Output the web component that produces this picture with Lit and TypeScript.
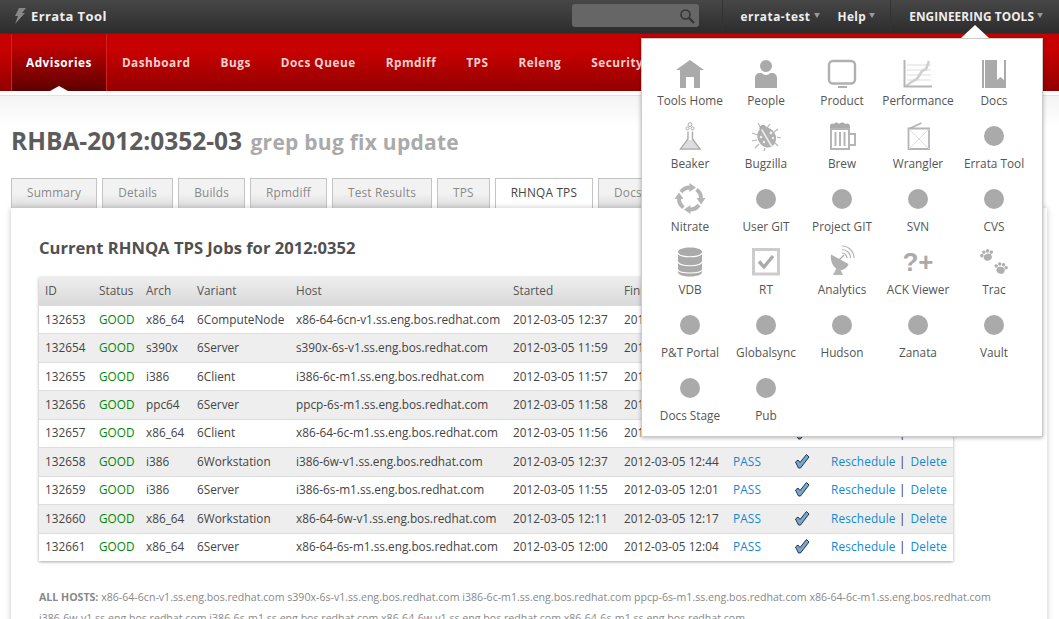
import { LitElement, css, html, svg } from 'lit'
import { customElement } from 'lit/decorators.js'

interface Job {
  id: string
  arch: string
  variant: string
  host: string
  started: string
  finished: string
}

const jobs: Job[] = [
  { id: '132653', arch: 'x86_64', variant: '6ComputeNode', host: 'x86-64-6cn-v1', started: '12:37', finished: '12:44' },
  { id: '132654', arch: 's390x', variant: '6Server', host: 's390x-6s-v1', started: '11:59', finished: '12:05' },
  { id: '132655', arch: 'i386', variant: '6Client', host: 'i386-6c-m1', started: '11:57', finished: '12:02' },
  { id: '132656', arch: 'ppc64', variant: '6Server', host: 'ppcp-6s-m1', started: '11:58', finished: '12:03' },
  { id: '132657', arch: 'x86_64', variant: '6Client', host: 'x86-64-6c-m1', started: '11:56', finished: '12:01' },
  { id: '132658', arch: 'i386', variant: '6Workstation', host: 'i386-6w-v1', started: '12:37', finished: '12:44' },
  { id: '132659', arch: 'i386', variant: '6Server', host: 'i386-6s-m1', started: '11:55', finished: '12:01' },
  { id: '132660', arch: 'x86_64', variant: '6Workstation', host: 'x86-64-6w-v1', started: '12:11', finished: '12:17' },
  { id: '132661', arch: 'x86_64', variant: '6Server', host: 'x86-64-6s-m1', started: '12:00', finished: '12:04' },
]

const navItems = ['Advisories', 'Dashboard', 'Bugs', 'Docs Queue', 'Rpmdiff', 'TPS', 'Releng', 'Security']
const tabs = ['Summary', 'Details', 'Builds', 'Rpmdiff', 'Test Results', 'TPS', 'RHNQA TPS', 'Docs']
const suffix = '.ss.eng.bos.redhat.com'

const dot = svg`<circle cx="15" cy="15" r="10" fill="#aaa" />`

const arrow = (deg: number) => svg`
  <g transform="rotate(${deg} 15 14.5)">
    <path d="M6 8 A11 11 0 0 1 15 3.5" fill="none" stroke="#b5b5b5" stroke-width="4" />
    <path d="M14.5 -1 L21 3.5 L14.5 8 Z" fill="#b5b5b5" />
  </g>`

const paw = (x: number, y: number, deg: number) => svg`
  <g transform="translate(${x} ${y}) rotate(${deg}) scale(1.15)" fill="#b0b0b0">
    <ellipse cx="0" cy="2" rx="3.6" ry="3" />
    <circle cx="-4.4" cy="-1" r="1.5" />
    <circle cx="-1.7" cy="-3.2" r="1.5" />
    <circle cx="1.7" cy="-3.2" r="1.5" />
    <circle cx="4.4" cy="-1" r="1.5" />
  </g>`

const icons: Record<string, unknown> = {
  home: svg`<path d="M15 2 29 12H25V30H19V19H11V30H5V12H1Z" fill="#aaa" />`,
  people: svg`
    <circle cx="15" cy="8" r="6" fill="#aaa" />
    <path d="M4 30V20C4 17 6 15 9 15L11 15C12 17.5 18 17.5 19 15H21C24 15 26 17 26 20V30Z" fill="#aaa" />`,
  product: svg`
    <rect x="2" y="3" width="26" height="22.5" rx="4" fill="none" stroke="#b0b0b0" stroke-width="2.4" />
    <rect x="11" y="28" width="9" height="2" fill="#b0b0b0" />`,
  performance: svg`
    <path d="M4 7H28M4 12H28M4 17H28M4 22H28" stroke="#ddd" stroke-width="1" />
    <path d="M3 28 10 23 14 21 19 13 23 11 26 3" fill="none" stroke="#cfcfcf" stroke-width="2.6" />
    <path d="M1.5 2V28.5H29" fill="none" stroke="#b5b5b5" stroke-width="2" />`,
  docs: svg`
    <path d="M3 2H27V30H3Z" fill="#aaa" />
    <path d="M5.5 2V30" stroke="#fff" stroke-width="1" />
    <path d="M18 2H25V22L21.5 19 18 22Z" fill="#fff" />`,
  beaker: svg`
    <circle cx="15" cy="3.6" r="1.9" fill="none" stroke="#aaa" />
    <circle cx="12.5" cy="7.4" r="1.5" fill="none" stroke="#aaa" />
    <circle cx="17.5" cy="7.4" r="1.5" fill="none" stroke="#aaa" />
    <path d="M7.5 27 13 19H18L23.5 27Z" fill="#ddd" />
    <path d="M13 10.5V18L5.5 28H25L17.5 18V10.5" fill="none" stroke="#aaa" stroke-width="1.4" />`,
  bugzilla: svg`
    <g stroke="#b5b5b5" stroke-width="1.2" fill="none">
      <path d="M7 2 10 7M19 3 16 7M1 12 7 14M1 20 6 19M4 27 8 23M27 8 23 11M30 17 26 16M27 25 24 22M13 30 14 27" />
    </g>
    <circle cx="12" cy="7.5" r="3.5" fill="#aaa" />
    <ellipse cx="15.7" cy="16.3" rx="9" ry="10.5" fill="#b0b0b0" transform="rotate(-30 15.7 16.3)" />
    <path d="M10.7 8.7 20.7 25.3" stroke="#eee" stroke-width="1.6" />
    <g fill="#eee">
      <circle cx="20" cy="12" r="1.4" /><circle cx="22" cy="17" r="1.2" /><circle cx="10" cy="16" r="1.3" />
      <circle cx="13" cy="21" r="1.2" />
    </g>`,
  brew: svg`
    <path d="M3 5C3 2 6 2 7 3 8 1 11 1 12 3 14 1 17 1 18 3 20 2 23 2 23 6V9H3Z" fill="#aaa" />
    <rect x="4" y="8" width="18" height="20" fill="none" stroke="#b5b5b5" stroke-width="2" />
    <path d="M8.5 11V25M13 11V25M17.5 11V25" stroke="#b5b5b5" stroke-width="2" />
    <path d="M23 13H28V24H23" fill="none" stroke="#b5b5b5" stroke-width="2" />`,
  wrangler: svg`
    <path d="M5.5 28V7.5H26V28Z" fill="none" stroke="#b5b5b5" stroke-width="1.8" />
    <path d="M5.5 8 18.5 2" stroke="#b5b5b5" stroke-width="1.8" />
    <path d="M6 8 26 28M26 8 6 28" stroke="#ddd" stroke-width="1" />`,
  nitrate: svg`${arrow(0)}${arrow(90)}${arrow(180)}${arrow(270)}`,
  vdb: svg`
    <path d="M3 5C3 -1 27 -1 27 5V25C27 31 3 31 3 25Z" fill="#aaa" />
    <path d="M3 6C5 11 25 11 27 6M3 15C5 20 25 20 27 15M3 23C5 27 25 27 27 23" fill="none" stroke="#fff" stroke-width="1.2" />`,
  rt: svg`
    <rect x="2.5" y="2.5" width="25" height="24.5" fill="none" stroke="#ccc" stroke-width="3" />
    <path d="M8 14.5 13 20 22 9" fill="none" stroke="#aaa" stroke-width="3.4" />`,
  analytics: svg`
    <path d="M4 7.5 21.5 17C20 22 15 24 11 22.5 6 20.5 3 14 4 7.5Z" fill="#b0b0b0" />
    <path d="M9.5 21 6 28H16L13 21.5Z" fill="#b5b5b5" />
    <path d="M12 13 17 8" stroke="#aaa" stroke-width="1.2" />
    <g fill="none" stroke="#b5b5b5" stroke-width="1.2">
      <path d="M15 6A5 5 0 0 1 20 11" /><path d="M15 2.5A8.5 8.5 0 0 1 23.5 11" /><path d="M15 -1A12 12 0 0 1 27 11" />
    </g>`,
  trac: svg`${paw(8, 8, -20)}${paw(22, 21, 10)}`,
}

const tools: { label: string; icon?: string }[] = [
  { label: 'Tools Home', icon: 'home' },
  { label: 'People', icon: 'people' },
  { label: 'Product', icon: 'product' },
  { label: 'Performance', icon: 'performance' },
  { label: 'Docs', icon: 'docs' },
  { label: 'Beaker', icon: 'beaker' },
  { label: 'Bugzilla', icon: 'bugzilla' },
  { label: 'Brew', icon: 'brew' },
  { label: 'Wrangler', icon: 'wrangler' },
  { label: 'Errata Tool' },
  { label: 'Nitrate', icon: 'nitrate' },
  { label: 'User GIT' },
  { label: 'Project GIT' },
  { label: 'SVN' },
  { label: 'CVS' },
  { label: 'VDB', icon: 'vdb' },
  { label: 'RT', icon: 'rt' },
  { label: 'Analytics', icon: 'analytics' },
  { label: 'ACK Viewer', icon: 'ack' },
  { label: 'Trac', icon: 'trac' },
  { label: 'P&T Portal' },
  { label: 'Globalsync' },
  { label: 'Hudson' },
  { label: 'Zanata' },
  { label: 'Vault' },
  { label: 'Docs Stage' },
  { label: 'Pub' },
]

@customElement('app-root')
export class AppRoot extends LitElement {
  static styles = css`
    :host {
      display: block;
      position: relative;
      height: 100vh;
      overflow: hidden;
      background: #fff;
      font-family: 'Open Sans', 'Noto Sans', sans-serif;
      font-size: 11.8px;
      color: #444;
    }
    .topbar {
      display: flex;
      align-items: center;
      box-sizing: border-box;
      height: 33px;
      padding-bottom: 2px;
      background: linear-gradient(#474747, #2c2c2c);
      color: #eee;
      font-weight: 700;
    }
    .logo {
      display: flex;
      align-items: center;
      gap: 5px;
      margin-left: 14px;
      font-size: 13px;
      letter-spacing: 0.4px;
    }
    .search {
      display: flex;
      align-items: center;
      justify-content: flex-end;
      box-sizing: border-box;
      width: 127px;
      height: 23px;
      margin-left: auto;
      padding-right: 4px;
      border-radius: 3px;
      background: #666;
    }
    .sep {
      align-self: stretch;
      width: 1px;
      background: #333;
    }
    .user {
      margin-left: 18px;
      letter-spacing: 0.55px;
    }
    .help {
      margin-left: 18px;
      letter-spacing: 0.4px;
    }
    .engineering {
      margin-left: 18px;
      margin-right: 16px;
      letter-spacing: 0.1px;
    }
    .sep-left {
      margin-left: 23px;
    }
    .sep-mid {
      margin-left: 15px;
    }
    .menu {
      display: flex;
      align-items: center;
    }
    .menu i {
      margin-left: 3px;
      width: 0;
      height: 0;
      border: 3.5px solid transparent;
      border-top: 5px solid #999;
      border-bottom: 0;
    }
    .nav {
      display: flex;
      box-sizing: border-box;
      height: 58px;
      padding-left: 11px;
      background: linear-gradient(#c70000 30%, #930000);
      border-top: 1px solid #a00;
    }
    .nav a {
      position: relative;
      padding: 20px 15px 0;
      color: #f3d0d0;
      font-weight: 700;
      letter-spacing: 0.5px;
    }
    .nav a.active {
      color: #fff;
      background: linear-gradient(#c00000 20%, #5e0000);
      box-shadow: inset 1px 0 #d02020, inset -1px 0 #d02020;
    }
    .nav a.active::after {
      content: '';
      position: absolute;
      left: 50%;
      bottom: 0;
      margin-left: -9px;
      border: 9px solid transparent;
      border-top: 0;
      border-bottom: 5px solid #fff;
    }
    .content {
      padding: 4px 12px 0 11px;
    }
    .fade {
      height: 30px;
      margin: 0 -12px -30px -11px;
      border-top: 1px solid #e2e2e2;
      background: linear-gradient(#f4f4f4, #fff);
    }
    h1 {
      margin: 0;
      padding-top: 28px;
      height: 54px;
      font-size: 24.5px;
      line-height: 34px;
      font-weight: 700;
      color: #5c5c5c;
    }
    h1 small {
      margin-left: 2px;
      font-size: 21px;
      color: #aaa;
      letter-spacing: 0.25px;
    }
    .tabs {
      display: flex;
      gap: 5px;
      height: 30px;
    }
    .tabs a {
      box-sizing: border-box;
      height: 30px;
      padding: 5px 15px 0;
      border: 1px solid #c4c4c4;
      border-bottom: 0;
      background: linear-gradient(#f2f2f2 50%, #dcdcdc);
      color: #888;
      letter-spacing: 0.2px;
    }
    .tabs a.active {
      background: #fff;
      color: #444;
    }
    .panel {
      position: relative;
      height: 420px;
      padding: 28px 28px 0;
      background: #fff;
      box-shadow: 0 0 6px rgba(0, 0, 0, 0.22);
    }
    h2 {
      margin: 0 0 18px;
      font-size: 16.6px;
      line-height: 23px;
      font-weight: 700;
      color: #505050;
    }
    table {
      table-layout: fixed;
      width: 914px;
      border-collapse: collapse;
      box-shadow: 0 1px 3px rgba(0, 0, 0, 0.35);
    }
    th,
    td {
      padding: 0 0 2px 6px;
      text-align: left;
      white-space: nowrap;
      overflow: hidden;
    }
    th {
      height: 26px;
      font-weight: 400;
      color: #555;
      background: linear-gradient(#eee, #d9d9d9);
    }
    td {
      height: 25.44px;
      border-top: 1px solid #ddd;
      color: #444;
      background: #fff;
    }
    tbody tr:nth-child(even) td {
      background: #eee;
    }
    .c-id { width: 48px; }
    .c-status { width: 41px; }
    .c-arch { width: 45px; }
    .c-variant { width: 93px; }
    .c-host { width: 211px; }
    .c-started { width: 105px; }
    .c-finished { width: 103px; }
    .c-result { width: 55px; }
    .c-check { width: 31px; }
    .good {
      color: #080;
    }
    td a {
      color: #1288d2;
      letter-spacing: 0.15px;
    }
    .bar {
      margin: 0 5px 0 3.5px;
      color: #333;
    }
    .check {
      display: block;
    }
    .hosts {
      margin: 26px 0 0;
      font-size: 10.6px;
      line-height: 21px;
      color: #888;
    }
    .hosts b {
      color: #888;
    }
    .hosts span {
      white-space: nowrap;
    }
    .tools {
      position: absolute;
      left: 641px;
      top: 38px;
      box-sizing: border-box;
      width: 402px;
      height: 399px;
      padding: 19px 10px 0;
      display: grid;
      grid-template-columns: repeat(5, 76px);
      grid-auto-rows: 63px;
      background: #fff;
      border: 1px solid #ccc;
      box-shadow: 0 1px 4px rgba(0, 0, 0, 0.3);
    }
    .tools::before {
      content: '';
      position: absolute;
      left: 319px;
      top: -14px;
      border: 14px solid transparent;
      border-top: 0;
      border-bottom: 13px solid #fff;
    }
    .tool {
      display: flex;
      flex-direction: column;
      align-items: center;
      color: #555;
      white-space: nowrap;
    }
    .tool svg {
      display: block;
      width: 30px;
      height: 30px;
      overflow: visible;
    }
    .tool span {
      margin-top: 4px;
      line-height: 16px;
    }
    .tool .ack {
      height: 30px;
      font-family: 'Liberation Sans', sans-serif;
      font-size: 26px;
      font-weight: 700;
      line-height: 30px;
      color: #aaa;
      margin: 0;
    }
  `

  renderTool(t: { label: string; icon?: string }) {
    const glyph =
      t.icon === 'ack'
        ? html`<span class="ack">?+</span>`
        : html`<svg viewBox="0 0 30 30">${t.icon ? icons[t.icon] : dot}</svg>`
    return html`<div class="tool">${glyph}<span>${t.label}</span></div>`
  }

  render() {
    return html`
      <div class="topbar">
        <div class="logo">
          <svg width="12" height="16" viewBox="0 0 12 16"><path d="M5 0H12L8 5H11L1 16 4 8H1Z" fill="#888" /></svg>
          Errata Tool
        </div>
        <div class="search">
          <svg width="16" height="16" viewBox="0 0 16 16">
            <circle cx="6.5" cy="6.5" r="4.5" fill="none" stroke="#333" stroke-width="1.5" />
            <path d="M10 10 15 15" stroke="#333" stroke-width="2.2" />
          </svg>
        </div>
        <div class="sep sep-left"></div>
        <div class="menu user">errata-test<i></i></div>
        <div class="menu help">Help<i></i></div>
        <div class="sep sep-mid"></div>
        <div class="menu engineering">ENGINEERING TOOLS<i></i></div>
      </div>
      <div class="nav">
        ${navItems.map((n, i) => html`<a class=${i === 0 ? 'active' : ''}>${n}</a>`)}
      </div>
      <div class="content">
        <div class="fade"></div>
        <h1>RHBA-2012:0352-03 <small>grep bug fix update</small></h1>
        <div class="tabs">
          ${tabs.map((t) => html`<a class=${t === 'RHNQA TPS' ? 'active' : ''}>${t}</a>`)}
        </div>
        <div class="panel">
          <h2>Current RHNQA TPS Jobs for 2012:0352</h2>
          <table>
            <thead>
              <tr>
                <th class="c-id">ID</th>
                <th class="c-status">Status</th>
                <th class="c-arch">Arch</th>
                <th class="c-variant">Variant</th>
                <th class="c-host">Host</th>
                <th class="c-started">Started</th>
                <th class="c-finished">Finished</th>
                <th class="c-result">Result</th>
                <th class="c-check"></th>
                <th></th>
              </tr>
            </thead>
            <tbody>
              ${jobs.map(
                (j) => html`
                  <tr>
                    <td>${j.id}</td>
                    <td class="good">GOOD</td>
                    <td>${j.arch}</td>
                    <td>${j.variant}</td>
                    <td>${j.host}${suffix}</td>
                    <td>2012-03-05 ${j.started}</td>
                    <td>2012-03-05 ${j.finished}</td>
                    <td><a>PASS</a></td>
                    <td>
                      <svg class="check" width="16" height="16" viewBox="0 0 16 16">
                        <path d="M1.5 9 4 7 6 9.5 12.5 1.5 15 4 6.5 15 4.5 15Z" fill="#7aa8cc" stroke="#1d3550" stroke-width="1" />
                      </svg>
                    </td>
                    <td><a>Reschedule</a><span class="bar">|</span><a>Delete</a></td>
                  </tr>
                `,
              )}
            </tbody>
          </table>
          <p class="hosts">
            <b>ALL HOSTS:</b>
            ${jobs.map((j) => html`<span>${j.host}${suffix}</span> `)}
          </p>
        </div>
      </div>
      <div class="tools">${tools.map((t) => this.renderTool(t))}</div>
    `
  }
}
